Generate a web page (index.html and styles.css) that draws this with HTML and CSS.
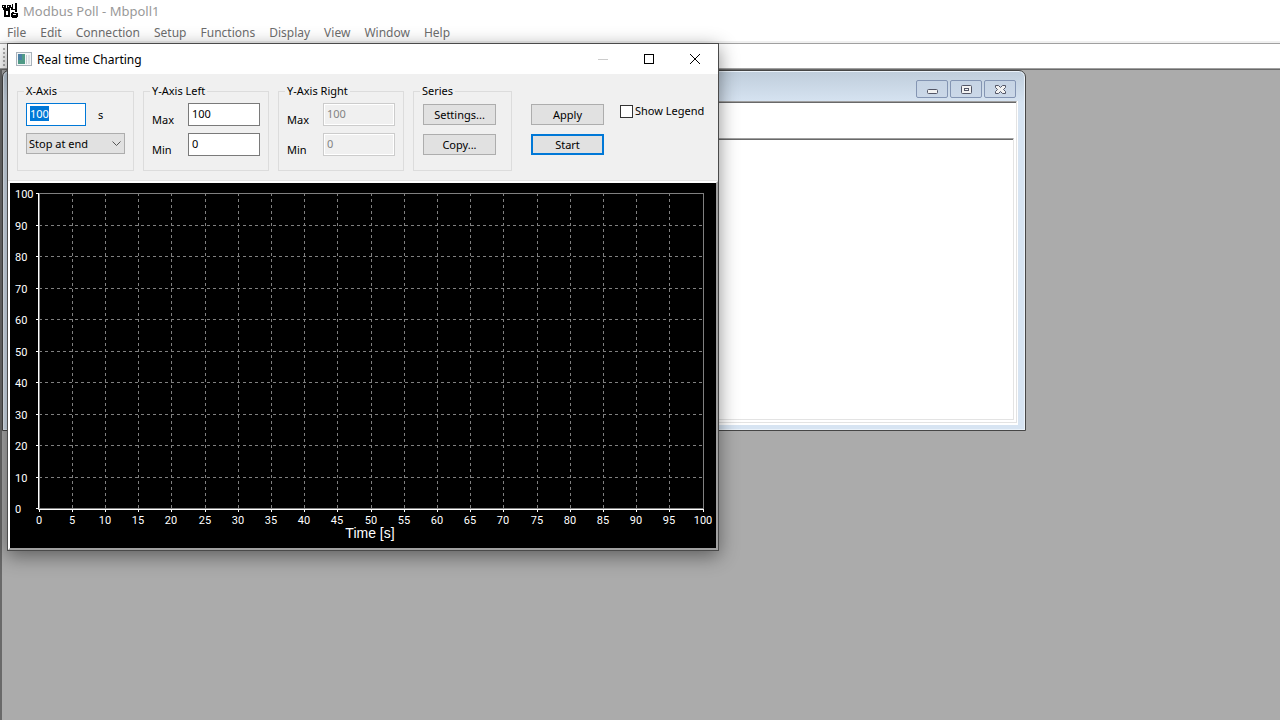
FILE: index.html
```
<!DOCTYPE html>
<html lang="en">
<head>
  <meta charset="UTF-8">
  <meta name="viewport" content="width=device-width,initial-scale=1.0">
  <title>Modbus Poll - Mbpoll1</title>
  <link rel="stylesheet" href="styles.css">
</head>
<body>
  <header class="app-title">
    <svg class="app-icon" viewBox="0 0 16 16" shape-rendering="crispEdges">
      <path d="M0 2h4v3H0zM5 2h4v3H5zM1 5h7v2H1zM2 7h6v7H2zM10 1h1v3h-1zM13 0h2v9h-2zM9 4h2v3H9zM11 6h2v1h-2zM9 10h7v4H9zM10 9h2v1h-2zM10 14h5v1h-5z" fill="#000"/>
      <path d="M1 3h1v1H1zM6 3h1v1H6zM4 8h2v4H4zM11 11h3v1h-3z" fill="#fff"/>
    </svg>
    <h1>Modbus Poll - Mbpoll1</h1>
  </header>

  <nav class="menu">
    <a href="#">File</a>
    <a href="#">Edit</a>
    <a href="#">Connection</a>
    <a href="#">Setup</a>
    <a href="#">Functions</a>
    <a href="#">Display</a>
    <a href="#">View</a>
    <a href="#">Window</a>
    <a href="#">Help</a>
  </nav>
  <div class="toolbar"><span class="grip"></span></div>

  <main class="workspace">
    <!-- Poll window behind the chart -->
    <section class="child">
      <div class="child-title">
        <button aria-label="Minimize"><svg viewBox="0 0 13 11"><rect x="1.5" y="5.5" width="10" height="4" rx="1"/></svg></button>
        <button aria-label="Restore"><svg viewBox="0 0 13 11"><rect x="1.5" y="1.5" width="10" height="8" rx="1"/><rect x="4.5" y="4.5" width="4" height="2"/></svg></button>
        <button aria-label="Close"><svg viewBox="0 0 13 11"><path d="M1.5 1.5h3l2 2 2-2h3v2l-2 2 2 2v2h-3l-2-2-2 2h-3v-2l2-2-2-2z"/></svg></button>
      </div>
      <div class="child-view">
        <div class="child-head"></div>
        <div class="child-grid"></div>
      </div>
    </section>
  </main>

  <!-- Real time Charting dialog -->
  <section class="dialog">
    <header class="dialog-title">
      <svg class="dialog-icon" viewBox="0 0 16 14" shape-rendering="crispEdges">
        <rect x="0" y="0" width="16" height="14" fill="#a9b3bb"/>
        <rect x="1" y="1" width="14" height="12" fill="#f4f6f7"/>
        <rect x="2" y="2" width="7" height="10" fill="#4f9a86"/>
        <rect x="2" y="2" width="4" height="6" fill="#4a7fa5"/>
        <rect x="10" y="3" width="1" height="9" fill="#c5cdd2"/>
        <rect x="12" y="3" width="2" height="9" fill="#dbe0e3"/>
      </svg>
      <h2>Real time Charting</h2>
      <button aria-label="Minimize" disabled><svg viewBox="0 0 12 12"><path d="M1 6.5h10" stroke="#ccc"/></svg></button>
      <button aria-label="Maximize"><svg viewBox="0 0 12 12"><rect x="1.5" y="1.5" width="9" height="9"/></svg></button>
      <button aria-label="Close"><svg viewBox="0 0 12 12"><path d="M1 1l10 10M11 1L1 11"/></svg></button>
    </header>

    <form class="settings">
      <fieldset class="x-axis">
        <legend>X-Axis</legend>
        <div class="row">
          <input id="xRange" type="text" value="100">
          <label for="xRange">s</label>
        </div>
        <div class="select">
          <select aria-label="X-Axis mode"><option>Stop at end</option></select>
          <svg viewBox="0 0 9 6"><path d="M.5 .5l4 4 4-4"/></svg>
        </div>
      </fieldset>
      <fieldset class="y-axis">
        <legend>Y-Axis Left</legend>
        <div class="row"><label for="leftMax">Max</label><input id="leftMax" type="text" value="100"></div>
        <div class="row"><label for="leftMin">Min</label><input id="leftMin" type="text" value="0"></div>
      </fieldset>
      <fieldset class="y-axis">
        <legend>Y-Axis Right</legend>
        <div class="row"><label for="rightMax">Max</label><input id="rightMax" type="text" value="100" disabled></div>
        <div class="row"><label for="rightMin">Min</label><input id="rightMin" type="text" value="0" disabled></div>
      </fieldset>
      <fieldset class="series">
        <legend>Series</legend>
        <button type="button">Settings...</button>
        <button type="button">Copy...</button>
      </fieldset>
      <div class="actions">
        <button type="button">Apply</button>
        <button type="button" class="default">Start</button>
      </div>
      <label class="check"><input type="checkbox">Show Legend</label>
    </form>

    <div class="chart">
      <svg id="plot" viewBox="0 0 706 365"></svg>
    </div>
  </section>

  <script>
  const plot = document.getElementById('plot');
  const LEFT = 29, TOP = 10, W = 664, H = 315;

  function add(tag, attrs, txt) {
    const el = document.createElementNS('http://www.w3.org/2000/svg', tag);
    for (const k in attrs) el.setAttribute(k, attrs[k]);
    if (txt !== undefined) el.textContent = txt;
    plot.appendChild(el);
  }

  // vertical grid + time labels
  for (let t = 0; t <= 100; t += 5) {
    const x = LEFT + Math.floor(W * t / 100);
    if (t > 0 && t < 100) add('path', { class: 'grid', d: `M${x + .5} ${TOP}v${H}` });
    add('path', { class: 'axis', d: `M${x + .5} ${TOP + H + 1}v3` });
    add('text', { class: 'tick', x: x, y: TOP + H + 16, 'text-anchor': 'middle' }, t);
  }

  // horizontal grid + value labels
  for (let v = 0; v <= 100; v += 10) {
    const y = TOP + Math.round(H * (100 - v) / 100);
    if (v > 0 && v < 100) add('path', { class: 'grid', d: `M${LEFT} ${y + .5}h${W}` });
    add('path', { class: 'axis', d: `M${LEFT - 3} ${y + .5}h3` });
    add('text', { class: 'tick', x: 5, y: y + 5 }, v);
  }

  add('rect', { class: 'frame', x: LEFT + .5, y: TOP + .5, width: W, height: H });
  add('path', { class: 'axis', d: `M${LEFT - .5} ${TOP}v${H + 1.5}h${W + 1.5}` });
  add('text', { class: 'caption', x: LEFT + W / 2 - 1, y: 355, 'text-anchor': 'middle' }, 'Time [s]');

  document.getElementById('xRange').select();
  </script>
</body>
</html>
```
FILE: styles.css
```
:root{--face:#f0f0f0;--line:#a0a0a0;--dark:#696969;--blue:#0078d7;--glass:#d7e4f2}
*{box-sizing:border-box;margin:0;padding:0}
body{min-height:100vh;display:flex;flex-direction:column;position:relative;background:#fff;font-family:'Noto Sans',sans-serif;font-size:12px;overflow:hidden}
h1,h2{font-size:12px;font-weight:400}
button,input,select{font:inherit;color:inherit}

.app-title{display:flex;align-items:center;gap:5px;height:22px;padding:0 2px;color:#999}
.app-title h1{font-size:13px}
.app-icon{width:16px;height:16px}
.menu{display:flex;gap:14px;height:21px;padding:0 7px;line-height:22px}
.menu a{color:#6d6d6d;text-decoration:none}
.toolbar{height:26px;border-top:1px solid var(--line);border-bottom:1px solid var(--line);box-shadow:0 -2px var(--face);padding:4px 3px}
.grip{display:block;width:2px;height:18px;background:repeating-linear-gradient(#b5b5b5 0 2px,#fff 2px 4px)}
.workspace{flex:1;position:relative;background:#ababab;border-top:1px solid var(--dark);border-left:2px solid var(--dark);overflow:hidden}

/* poll window */
.child{position:absolute;left:0;top:0;width:1024px;height:361px;display:flex;flex-direction:column;padding:0 8px 7px 7px;background:linear-gradient(#bfcddb,var(--glass) 32px);border:1px solid #464646;border-radius:7px 7px 0 0;box-shadow:inset 0 0 0 1px #eaf2fa}
.child-title{height:30px;display:flex;justify-content:flex-end;align-items:flex-end;gap:2px;padding:0 1px 3px}
.child-title button{width:32px;height:18px;border:1px solid #8495b3;border-radius:2px;background:linear-gradient(#c6d4e4,#cbd8e8);display:flex;align-items:center;justify-content:center}
.child-title svg{width:13px;height:11px;fill:#f2f2f2;stroke:#535666}
.child-view{flex:1;display:flex;flex-direction:column;background:#fff;border:1px solid #e3e3e3;border-top-color:var(--line);box-shadow:0 1px 0 1px #fff,inset 0 1px var(--dark)}
.child-head{height:36px}
.child-grid{flex:1;margin:0 2px 2px;border:1px solid #e3e3e3;border-top-color:var(--line);box-shadow:inset 0 1px var(--dark)}

/* chart dialog */
.dialog{position:absolute;left:7px;top:43px;width:712px;background:var(--face);border:1px solid #4a4a4a;box-shadow:0 5px 18px rgba(0,0,0,.45);font-size:11px}
.dialog-title{display:flex;align-items:center;height:30px;padding-left:8px;background:#fff}
.dialog-title h2{flex:1;padding-left:5px}
.dialog-icon{width:16px;height:14px}
.dialog-title button{width:46px;height:30px;border:0;background:none}
.dialog-title button svg{display:block;width:12px;height:12px;margin:0 auto;fill:none;stroke:#000}

.settings{display:flex;align-items:flex-start;gap:9px;height:107px;padding:10px 9px 0;border-bottom:1px solid #e3e3e3}
fieldset{height:87px;min-width:0;border:1px solid #dcdcdc;padding:0 8px}
legend{padding:0 2px;margin-left:-2px;line-height:14px}
.x-axis{width:117px}
.y-axis{width:126px}
.series{width:99px;padding:0 9px}
.series legend{margin-left:-3px}
.row{display:flex;gap:12px;margin:5px 0 7px}
.row input{width:60px;height:23px;padding:0 3px 3px;border:1px solid #7a7a7a;background:#fff;line-height:14px;outline:0}
.row input:focus{border-color:var(--blue)}
.row input::selection{background:var(--blue);color:#fff}
.row input:disabled{border-color:#ccc;background:var(--face);color:#838383;box-shadow:inset 0 0 0 1px #fff}
.row label{line-height:23px}
.y-axis .row{gap:0}
.y-axis label{flex:1;padding-top:6px;line-height:22px;height:23px}
.y-axis .row input{width:72px}
.select{position:relative;width:99px}
.select select{display:block;width:100%;height:21px;padding:0 2px;border:1px solid #adadad;border-radius:0;background:#e1e1e1;appearance:none}
.select svg{position:absolute;right:4px;top:8px;width:9px;height:6px;fill:none;stroke:#555;pointer-events:none}
.series button,.actions button{display:block;width:73px;height:21px;border:1px solid #adadad;background:#e1e1e1}
.series button{margin-top:6px}
.series button+button,.actions button+button{margin-top:9px}
.actions{padding:20px 7px 0 10px}
.actions .default{border:2px solid var(--blue)}
.check{display:flex;align-items:center;gap:2px;margin-top:20px;line-height:14px}
.check input{width:13px;height:13px;appearance:none;border:1px solid #333;background:#fff}
.check input:checked{background:var(--blue)}

.chart{border:2px solid var(--line);border-top-color:#fff;border-left-color:#fff}
.chart svg{display:block;width:100%;background:#000}
.grid{stroke:#808080;stroke-dasharray:3 3}
.frame{fill:none;stroke:#808080}
.axis{fill:none;stroke:#fff}
.tick{fill:#fff;font:11px Roboto,sans-serif}
.caption{fill:#fff;font:14px 'Liberation Sans',sans-serif}
```
